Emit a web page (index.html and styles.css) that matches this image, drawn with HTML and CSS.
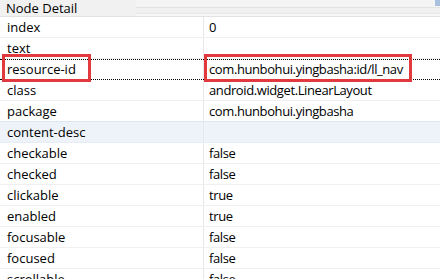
FILE: index.html
```html
<!DOCTYPE html>
<html>
<head>
<meta charset="utf-8">
<link rel="stylesheet" href="styles.css">
</head>
<body>
<div class="panel">
  <div class="header"><span class="title">Node Detail</span><span class="strip"></span><span class="corner"></span></div>
  <div class="rows">
    <div class="row"><div class="key">index</div><div class="val">0</div></div>
    <div class="row"><div class="key">text</div><div class="val"></div></div>
    <div class="row focus"><div class="key"><span class="mark mark-key"></span>resource-id</div><div class="val"><span class="mark mark-val"></span>com.hunbohui.yingbasha:id/ll_nav</div></div>
    <div class="row"><div class="key">class</div><div class="val">android.widget.LinearLayout</div></div>
    <div class="row"><div class="key">package</div><div class="val">com.hunbohui.yingbasha</div></div>
    <div class="row selected"><div class="key">content-desc</div><div class="val"></div></div>
    <div class="row"><div class="key">checkable</div><div class="val">false</div></div>
    <div class="row"><div class="key">checked</div><div class="val">false</div></div>
    <div class="row"><div class="key">clickable</div><div class="val">true</div></div>
    <div class="row"><div class="key">enabled</div><div class="val">true</div></div>
    <div class="row"><div class="key">focusable</div><div class="val">false</div></div>
    <div class="row"><div class="key">focused</div><div class="val">false</div></div>
    <div class="row"><div class="key">scrollable</div><div class="val">false</div></div>
  </div>
</div>
</body>
</html>
```
FILE: styles.css
```css
html, body {
  margin: 0;
  padding: 0;
  background: #ffffff;
  overflow: hidden;
}
.panel {
  width: 440px;
  height: 279px;
  font-family: "Open Sans", "Noto Sans", sans-serif;
  font-size: 13px;
  color: #000;
}
.header {
  height: 16px;
  position: relative;
  background: #f1f1f1;
  border-bottom: 1px solid #e2e2e2;
  display: flex;
}
.title {
  width: 130px;
  padding-left: 6px;
  line-height: 16px;
  flex: none;
}
.strip {
  flex: 1;
  background: linear-gradient(#f4f4f4 0, #f4f4f4 7px, #e2e2e2 7px, #e2e2e2 8px, #f0f0f0 8px, #f0f0f0 13px, #e8e8e8 13px, #e8e8e8 14px, #f6f6f6 14px);
}
.corner {
  position: absolute;
  right: 0;
  top: 0;
  width: 5px;
  height: 6px;
  background: #a9c1df;
}
.rows {
  display: flex;
  flex-direction: column;
}
.row {
  display: grid;
  grid-template-columns: 204px 1fr;
  height: 20px;
  border-bottom: 1px solid #f0f0f0;
  line-height: 20px;
}
.key, .val {
  position: relative;
  white-space: nowrap;
}
.key {
  padding-left: 7px;
  border-right: 1px solid #e8e8e8;
}
.val {
  padding-left: 5px;
  letter-spacing: -0.4px;
}
.row.selected {
  background: #eef3fa;
  border-top: 1px solid #dde6f1;
  margin-top: -1px;
  border-bottom: 1px solid #e6edf6;
}
.row.focus {
  height: 19px;
  line-height: 19px;
  border-top: 1px dotted #000;
  border-bottom: 1px dotted #000;
}
.mark {
  position: absolute;
  border: 3px solid #e03a3e;
  box-sizing: border-box;
}
.mark-key {
  left: 2px;
  top: -6px;
  width: 89px;
  height: 28px;
}
.mark-val {
  left: 0;
  top: -6px;
  width: 208px;
  height: 28px;
}
```
